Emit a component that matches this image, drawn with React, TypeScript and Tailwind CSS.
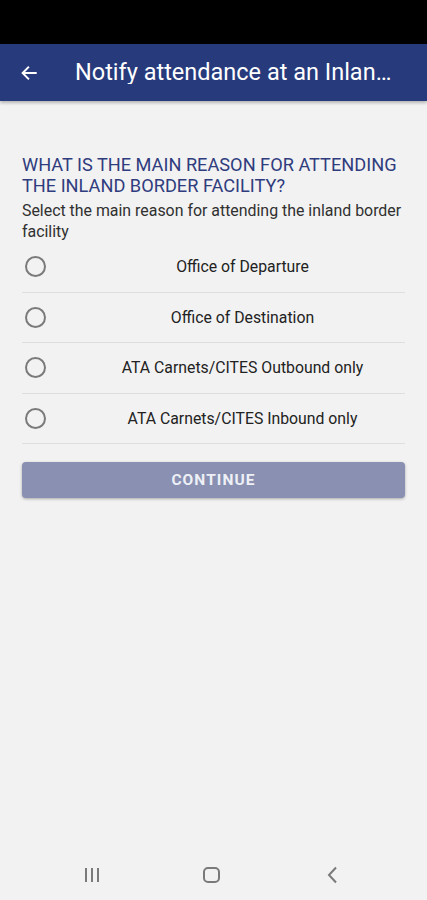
import { useState } from 'react';

const options = [
  'Office of Departure',
  'Office of Destination',
  'ATA Carnets/CITES Outbound only',
  'ATA Carnets/CITES Inbound only',
];

function BackArrow() {
  return (
    <svg width="18" height="18" viewBox="0 0 24 24" fill="none" stroke="white" strokeWidth="2.6" strokeLinecap="square">
      <path d="M21 12H4" />
      <path d="M11 4.5L3.5 12l7.5 7.5" />
    </svg>
  );
}

export default function App() {
  const [selected, setSelected] = useState<number | null>(null);

  return (
    <div className="flex h-[900px] w-[427px] flex-col bg-[#f2f2f2] font-['Roboto','Liberation_Sans',sans-serif]">
      {/* status bar */}
      <div className="h-[44px] bg-black" />

      {/* app bar */}
      <header className="flex h-[57px] items-center bg-[#263a7c] shadow-[0_2px_3px_rgba(0,0,0,0.25)]">
        <button className="flex w-[75px] shrink-0 items-center pl-[20px]">
          <BackArrow />
        </button>
        <h1 className="truncate pr-[28px] text-[23.5px] leading-none text-white">Notify attendance at an Inland Border Facility</h1>
      </header>

      <main className="flex-1 px-[22px] pt-[53px]">
        <h2 className="text-[18.2px] leading-[21px] uppercase text-[#2f3c7e]">
          What is the main reason for attending the inland border facility?
        </h2>
        <p className="mt-[4px] text-[15.9px] leading-[21px] text-[#303030]">
          Select the main reason for attending the inland border facility
        </p>

        <div>
          {options.map((opt, i) => (
            <label
              key={opt}
              className="flex h-[50.6px] cursor-pointer items-center border-b border-[#dedede]"
              onClick={() => setSelected(i)}
            >
              <span className="flex w-[58px] items-center pl-[3px]">
                <span
                  className={
                    selected === i
                      ? 'h-[21px] w-[21px] rounded-full border-[2px] border-[#263a7c] bg-[radial-gradient(circle,#263a7c_40%,transparent_45%)]'
                      : 'h-[21px] w-[21px] rounded-full border-[2px] border-[#7a7a7a]'
                  }
                />
              </span>
              <span className="flex-1 text-center text-[15.8px] text-[#222]">{opt}</span>
            </label>
          ))}
        </div>

        <button
          disabled={selected === null}
          className="mt-[18px] flex h-[36px] w-full items-center justify-center rounded-[4px] bg-[#8990b2] text-[15.5px] font-bold tracking-[0.07em] text-[#eef0f6] shadow-[0_1px_3px_rgba(0,0,0,0.3)]"
        >
          CONTINUE
        </button>
      </main>

      {/* system nav bar */}
      <nav className="flex h-[50px] items-center pb-[1px]">
        <span className="ml-[84px] flex w-[16px] justify-center gap-[4px]">
          <span className="h-[14px] w-[2px] bg-[#7a7a7a]" />
          <span className="h-[14px] w-[2px] bg-[#7a7a7a]" />
          <span className="h-[14px] w-[2px] bg-[#7a7a7a]" />
        </span>
        <span className="ml-[103px] h-[16px] w-[17px] rounded-[5px] border-[2px] border-[#7a7a7a]" />
        <svg className="ml-[106px]" width="14" height="20" viewBox="0 0 14 20" fill="none" stroke="#7a7a7a" strokeWidth="2">
          <path d="M10 2.5L3 10l7 7.5" />
        </svg>
      </nav>
    </div>
  );
}
